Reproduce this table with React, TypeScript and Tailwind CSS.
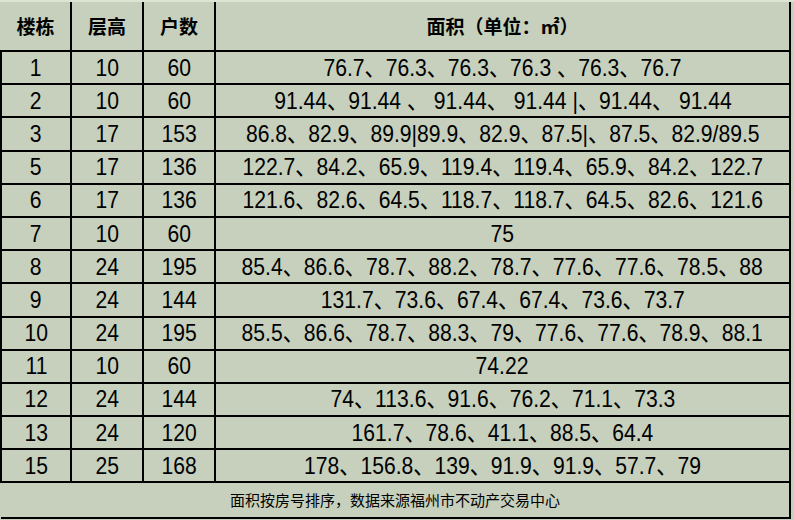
const rows: [string, string, string, string][] = [
  ["1", "10", "60", "76.7、76.3、76.3、76.3 、76.3、76.7"],
  ["2", "10", "60", "91.44、91.44 、 91.44、 91.44 |、91.44、 91.44"],
  ["3", "17", "153", "86.8、82.9、89.9|89.9、82.9、87.5|、87.5、82.9/89.5"],
  ["5", "17", "136", "122.7、84.2、65.9、119.4、119.4、65.9、84.2、122.7"],
  ["6", "17", "136", "121.6、82.6、64.5、118.7、118.7、64.5、82.6、121.6"],
  ["7", "10", "60", "75"],
  ["8", "24", "195", "85.4、86.6、78.7、88.2、78.7、77.6、77.6、78.5、88"],
  ["9", "24", "144", "131.7、73.6、67.4、67.4、73.6、73.7"],
  ["10", "24", "195", "85.5、86.6、78.7、88.3、79、77.6、77.6、78.9、88.1"],
  ["11", "10", "60", "74.22"],
  ["12", "24", "144", "74、113.6、91.6、76.2、71.1、73.3"],
  ["13", "24", "120", "161.7、78.6、41.1、88.5、64.4"],
  ["15", "25", "168", "178、156.8、139、91.9、91.9、57.7、79"],
];

const num = "font-['Liberation_Sans','Noto_Sans_CJK_SC',sans-serif]";
const cjk = "font-['Noto_Sans_CJK_SC',sans-serif]";

function Cell({ text }: { text: string }) {
  return (
    <td className="border-x-2 border-b-2 border-black p-0 leading-none">
      <div className="flex justify-center">
        <span className="shrink-0 scale-x-[0.88] whitespace-pre">{text}</span>
      </div>
    </td>
  );
}

export default function App() {
  return (
    <div className="w-[794px] h-[520px] bg-[#c6d0bd] overflow-hidden">
      <div className="h-[2px] bg-[#dce4d4]" />
      <table className="w-[791px] table-fixed border-collapse text-black">
        <colgroup>
          <col className="w-[70px]" />
          <col className="w-[72px]" />
          <col className="w-[72px]" />
          <col />
        </colgroup>
        <thead>
          <tr className={`h-[49px] ${cjk} text-[19px] font-bold`}>
            <th className="border-r-2 border-b-2 border-black">楼栋</th>
            <th className="border-x-2 border-b-2 border-black">层高</th>
            <th className="border-x-2 border-b-2 border-black">户数</th>
            <th className="border-x-2 border-b-2 border-black">面积（单位：㎡）</th>
          </tr>
        </thead>
        <tbody className={`${num} text-[24px]`}>
          {rows.map((r, i) => (
            <tr key={i} className="h-[33.2px]">
              <Cell text={r[0]} />
              <Cell text={r[1]} />
              <Cell text={r[2]} />
              <Cell text={r[3]} />
            </tr>
          ))}
          <tr className="h-[36px]">
            <td colSpan={4} className={`border-r-2 border-b-2 border-black text-center ${cjk} text-[15px]`}>
              面积按房号排序，数据来源福州市不动产交易中心
            </td>
          </tr>
        </tbody>
      </table>
    </div>
  );
}
